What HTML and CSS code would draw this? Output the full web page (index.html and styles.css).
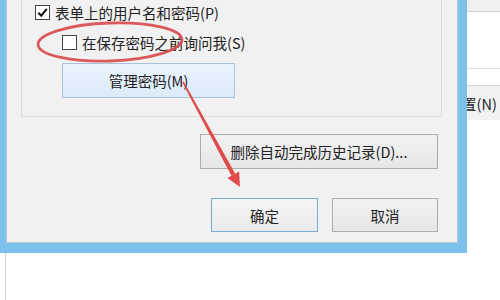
FILE: index.html
```html
<!DOCTYPE html>
<html lang="zh-CN">
<head>
<meta charset="utf-8">
<title>自动完成设置</title>
<link rel="stylesheet" href="styles.css">
</head>
<body>
<div class="top">
  <div class="dialog">
    <div class="group">
      <div class="check-row">
        <span class="box"><svg viewBox="0 0 13 13" width="13" height="13"><path d="M2.3 6.8 L5.2 9.7 L10.8 2.8" fill="none" stroke="#111" stroke-width="2"/></svg></span>
        <span class="label">表单上的用户名和密码(P)</span>
      </div>
      <div class="check-row sub">
        <span class="box"></span>
        <span class="label">在保存密码之前询问我(S)</span>
      </div>
      <button class="btn manage">管理密码(M)</button>
    </div>
    <div class="actions">
      <button class="btn delete">删除自动完成历史记录(D)...</button>
      <div class="ok-row">
        <button class="btn ok">确定</button>
        <button class="btn cancel">取消</button>
      </div>
    </div>
  </div>
  <div class="behind">
    <div class="b-top"></div>
    <div class="b-blank"></div>
    <div class="b-sep"></div>
    <div class="b-btn"><span class="b-text">置(N)</span></div>
    <div class="b-rest"></div>
  </div>
</div>
<div class="bottom"><div class="vline"></div></div>

<svg class="marks" width="500" height="300" viewBox="0 0 500 300">
  <ellipse cx="110" cy="42" rx="72" ry="19" transform="rotate(-2 110 42)" fill="none" stroke="#d9484a" stroke-width="2.8" opacity="0.9"/>
  <polygon points="182.3,82.4 183.7,81.6 235.2,173.7 231.4,175.7" fill="#e04a4a"/>
  <polygon points="240,187 227.5,177.9 239.1,171.5" fill="#e04a4a"/>
</svg>
</body>
</html>
```
FILE: styles.css
```css
html, body {
  margin: 0;
  padding: 0;
}
body {
  width: 500px;
  height: 300px;
  overflow: hidden;
  position: relative;
  background: #ffffff;
  font-family: "Noto Sans CJK SC", "Noto Sans", sans-serif;
  font-size: 14.5px;
  color: #222222;
}
.top {
  display: flex;
  height: 253px;
}
.dialog {
  width: 467px;
  box-sizing: border-box;
  border-left: 6px solid #7cc1ee;
  border-right: 9px solid #7cc1ee;
  border-bottom: 10px solid #7cc1ee;
  background: #f1f1f1;
  display: flex;
  flex-direction: column;
  box-shadow: inset 1px 0 0 #b9c9d4, inset -1px 0 0 #b9c9d4, inset 0 -1px 0 #b9c9d4;
}
.group {
  margin-left: 15px;
  width: 421px;
  height: 117px;
  box-sizing: border-box;
  border: 1px solid #dcdcdc;
  border-top: none;
  padding-left: 13px;
  display: flex;
  flex-direction: column;
  align-items: flex-start;
}
.check-row {
  display: flex;
  align-items: center;
  height: 25px;
  gap: 5px;
}
.check-row.sub {
  margin-top: 5px;
  margin-left: 27px;
}
.box {
  width: 15px;
  height: 15px;
  box-sizing: border-box;
  border: 1px solid #444;
  background: #fff;
  display: flex;
  align-items: center;
  justify-content: center;
}
.box svg {
  display: block;
  flex: none;
}
.label {
  line-height: 24px;
  white-space: nowrap;
}
.btn {
  font-family: inherit;
  font-size: 14.5px;
  color: #222222;
  box-sizing: border-box;
  padding: 0;
  margin: 0;
  border: 1px solid #adadad;
  background: linear-gradient(#f2f2f2, #e6e6e6);
  display: flex;
  align-items: center;
  justify-content: center;
  white-space: nowrap;
}
.manage {
  margin-top: 8px;
  margin-left: 27px;
  width: 173px;
  height: 35px;
  border-color: #a9c3dc;
  background: linear-gradient(#e9f3fc, #dcebf9);
}
.actions {
  display: flex;
  flex-direction: column;
  align-items: flex-end;
  padding-right: 20px;
}
.delete {
  margin-top: 17px;
  width: 238px;
  height: 35px;
}
.ok-row {
  display: flex;
  gap: 14px;
  margin-top: 29px;
}
.ok {
  width: 107px;
  height: 34px;
  border-color: #78acd8;
  background: linear-gradient(#f5f5f5, #e9e9e9);
}
.cancel {
  width: 106px;
  height: 34px;
}
.behind {
  width: 33px;
  display: flex;
  flex-direction: column;
  background: #ffffff;
  overflow: hidden;
}
.b-top {
  height: 11px;
  background: #f0f0f0;
  border-bottom: 1px solid #d4d4d4;
}
.b-blank {
  height: 56px;
}
.b-sep {
  height: 16px;
  border-top: 1px solid #dddddd;
  border-bottom: 1px solid #d4d4d4;
}
.b-btn {
  height: 34px;
  background: #f2f2f2;
  display: flex;
  align-items: center;
}
.b-text {
  margin-left: -5px;
  white-space: nowrap;
  color: #222222;
}
.b-rest {
  flex: 1;
}
.bottom {
  height: 47px;
  display: flex;
}
.vline {
  margin-left: 5px;
  width: 1px;
  background: #cfcfcf;
}
.marks {
  position: absolute;
  left: 0;
  top: 0;
  pointer-events: none;
}
```
